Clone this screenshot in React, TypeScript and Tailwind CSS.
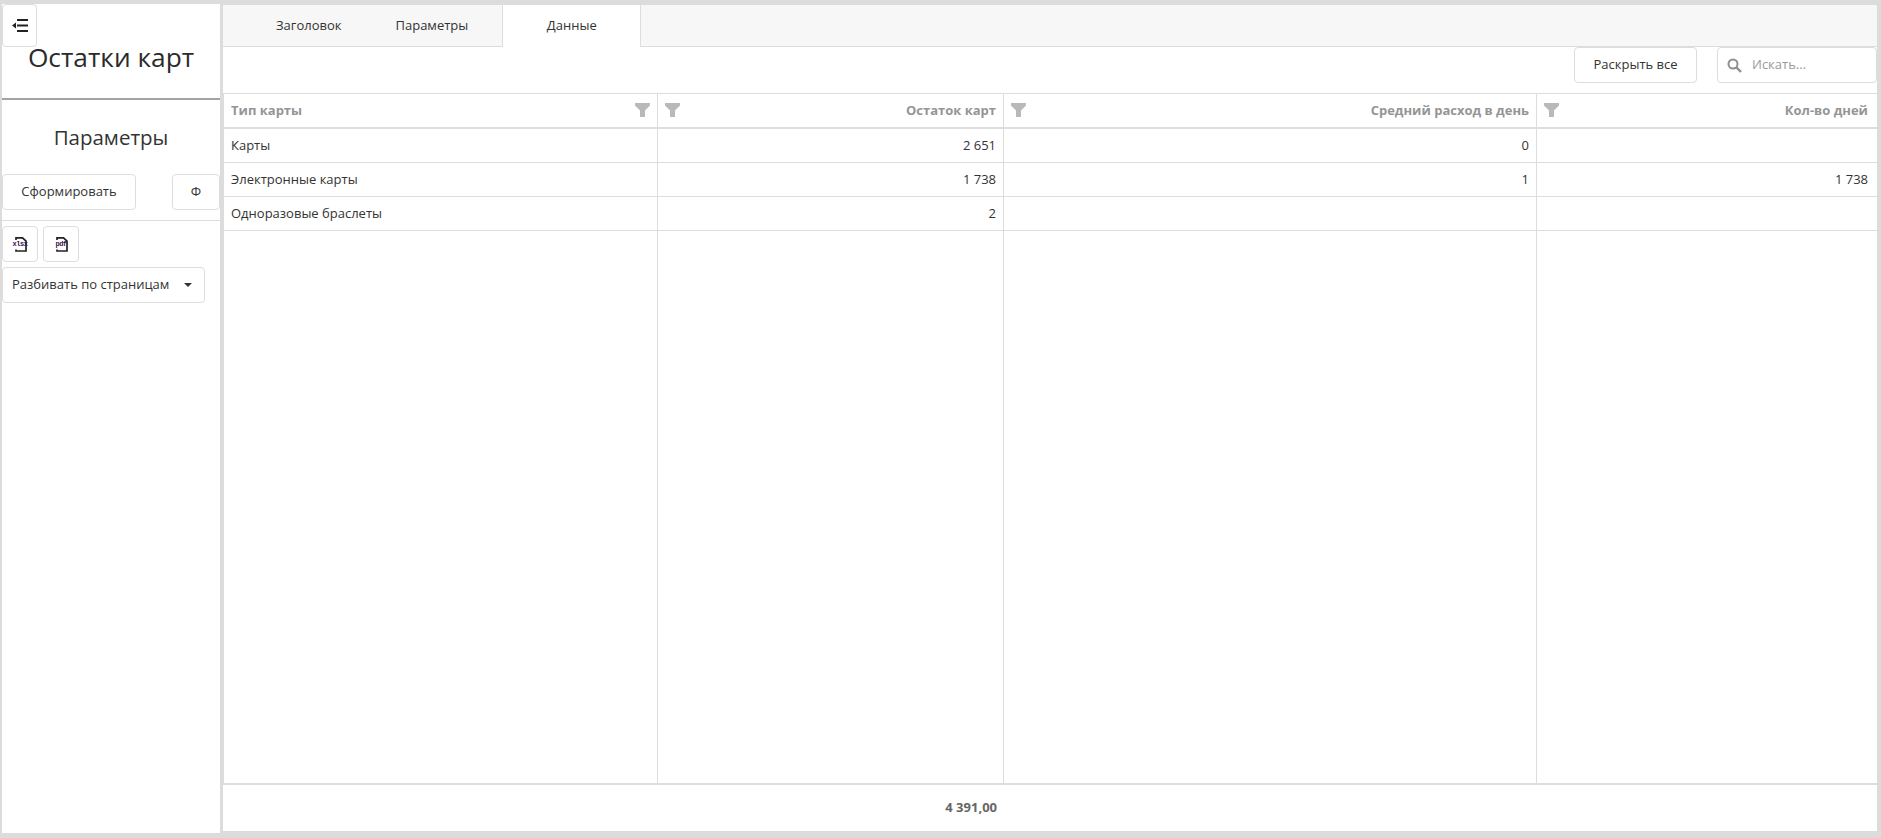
import React from "react";

const font = "font-['Open_Sans','Noto_Sans',sans-serif]";

const rows = [
  { name: "Карты", left: "2 651", avg: "0", days: "" },
  { name: "Электронные карты", left: "1 738", avg: "1", days: "1 738" },
  { name: "Одноразовые браслеты", left: "2", avg: "", days: "" },
];

const cols = ["w-[435px]", "w-[346px]", "w-[533px]", "flex-1"];

const Funnel = () => (
  <svg width="15" height="14" viewBox="0 0 15 14" className="shrink-0">
    <path d="M0 0h15v2.500L10 7.500V14H5V7.500L0 2.500z" fill="#b9b9b9" />
  </svg>
);

const FileIcon = ({ label }: { label: string }) => (
  <span className="relative block h-[15px] w-[15px]">
    <svg width="15" height="15" viewBox="0 0 15 15" className="absolute left-0 top-0">
      <path d="M3 3V.8h6.500L13 4.200V14H3v-1.500" fill="none" stroke="#222" strokeWidth="1.700" />
    </svg>
    <span className="absolute left-1/2 top-[3px] -translate-x-1/2 font-['Liberation_Mono',monospace] text-[7px] leading-[9px] font-bold tracking-[-0.5px] text-[#3a1050]">
      {label}
    </span>
  </span>
);

const HeaderCell = ({ title, className, right }: { title: string; className: string; right?: boolean }) => (
  <div className={`${className} flex h-full items-center border-r border-[#dddddd] px-[7px] first:border-l last:border-r-0 last:pr-[9px]`}>
    {right ? (
      <>
        <span className="-mt-[2px]"><Funnel /></span>
        <span className="ml-auto truncate text-[13px] font-bold text-[#959595]">{title}</span>
      </>
    ) : (
      <>
        <span className="truncate text-[13px] font-bold text-[#959595]">{title}</span>
        <span className="-mt-[2px] ml-auto"><Funnel /></span>
      </>
    )}
  </div>
);

const BodyCell = ({ value, className, right }: { value: string; className: string; right?: boolean }) => (
  <div className={`${className} flex h-full items-center border-r border-[#dddddd] px-[7px] text-[13px] text-[#333333] first:border-l last:border-r-0 last:pr-[9px] ${right ? "justify-end" : ""}`}>
    {value}
  </div>
);

export default function App() {
  return (
    <div className={`${font} flex h-[838px] w-[1881px] gap-[3px] overflow-hidden bg-[#dcdcdc] pb-[5px] pl-[2px] pr-[4px] pt-[4px] text-[13px] text-[#333333]`}>
      <aside className="relative flex h-full w-[218px] shrink-0 flex-col bg-white">
        <button className="absolute left-0 top-0 flex h-[43px] w-[35px] items-center justify-center rounded-[4px] border border-[#dddddd] bg-white">
          <svg width="16" height="13" viewBox="0 0 16 13">
            <path d="M5 1h11M5 6.500h11M5 12h11" stroke="#222" strokeWidth="2" />
            <path d="M0 6.500l4-3v6z" fill="#222" />
          </svg>
        </button>
        <h1 className="mt-[35px] text-center text-[26.300px] leading-[36px] font-normal text-[#2b2b2b]">Остатки карт</h1>
        <div className="mt-[23px] h-[2px] w-full bg-[#a3a3a3]" />
        <h2 className="mt-[23px] text-center text-[20.500px] leading-[28px] font-normal text-[#333333]">Параметры</h2>
        <div className="mt-[23px] flex items-center justify-between">
          <button className="h-[36px] w-[134px] rounded-[4px] border border-[#dddddd] bg-white text-[13px]">Сформировать</button>
          <button className="h-[36px] w-[48px] rounded-[4px] border border-[#dddddd] bg-white text-[13px]">Ф</button>
        </div>
        <div className="mt-[10px] h-px w-full bg-[#dddddd]" />
        <div className="mt-[5px] flex gap-[5px]">
          <button className="flex h-[36px] w-[36px] items-center justify-center rounded-[4px] border border-[#dddddd] bg-white"><FileIcon label="xlsx" /></button>
          <button className="flex h-[36px] w-[36px] items-center justify-center rounded-[4px] border border-[#dddddd] bg-white"><FileIcon label="pdf" /></button>
        </div>
        <div className="mt-[5px] flex h-[36px] w-[203px] items-center justify-between rounded-[4px] border border-[#dddddd] bg-white pl-[9px] pr-[12px] text-[13px]">
          <span>Разбивать по страницам</span>
          <svg width="8" height="4" viewBox="0 0 8 4"><path d="M0 0h8L4 4z" fill="#333" /></svg>
        </div>
      </aside>

      <main className="mt-[1px] flex h-[826px] min-w-0 flex-1 flex-col bg-white">
        <div className="flex h-[42px] shrink-0 border-b border-[#dddddd] bg-[#f7f7f7]">
          <div className="ml-[53px] flex h-[41px] items-center">Заголовок</div>
          <div className="ml-[54px] flex h-[41px] items-center">Параметры</div>
          <div className="ml-[34px] flex h-[42px] w-[139px] items-center justify-center border-x border-[#dddddd] bg-white">Данные</div>
        </div>
        <div className="flex h-[46px] shrink-0 items-start justify-end gap-[20px]">
          <button className="h-[36px] w-[123px] rounded-[4px] border border-[#dddddd] bg-white text-[13px]">Раскрыть все</button>
          <div className="flex h-[36px] w-[160px] items-center gap-[10px] rounded-[4px] border border-[#dddddd] bg-white pl-[9px] text-[13px] text-[#9a9a9a]">
            <svg width="15" height="15" viewBox="0 0 15 15" className="shrink-0">
              <circle cx="6" cy="6" r="4.500" fill="none" stroke="#8f8f8f" strokeWidth="2" />
              <path d="M9.500 9.500L14 14" stroke="#8f8f8f" strokeWidth="2.400" />
            </svg>
            <span>Искать...</span>
          </div>
        </div>
        <div className="flex h-[36px] shrink-0 border-y border-[#dddddd] border-b-2">
          <HeaderCell className={cols[0]} title="Тип карты" />
          <HeaderCell className={cols[1]} title="Остаток карт" right />
          <HeaderCell className={cols[2]} title="Средний расход в день" right />
          <HeaderCell className={cols[3]} title="Кол-во дней" right />
        </div>
        {rows.map((row) => (
          <div key={row.name} className="flex h-[34px] shrink-0 border-b border-[#dddddd]">
            <BodyCell className={cols[0]} value={row.name} />
            <BodyCell className={cols[1]} value={row.left} right />
            <BodyCell className={cols[2]} value={row.avg} right />
            <BodyCell className={cols[3]} value={row.days} right />
          </div>
        ))}
        <div className="flex min-h-0 flex-1">
          <div className={`${cols[0]} border-x border-[#dddddd]`} />
          <div className={`${cols[1]} border-r border-[#dddddd]`} />
          <div className={`${cols[2]} border-r border-[#dddddd]`} />
          <div className={cols[3]} />
        </div>
        <div className="flex h-[48px] shrink-0 items-center border-t-2 border-[#dddddd]">
          <div className="w-[781px] pr-[7px] text-right text-[13px] font-bold text-[#666666]">4 391,00</div>
        </div>
      </main>
    </div>
  );
}
